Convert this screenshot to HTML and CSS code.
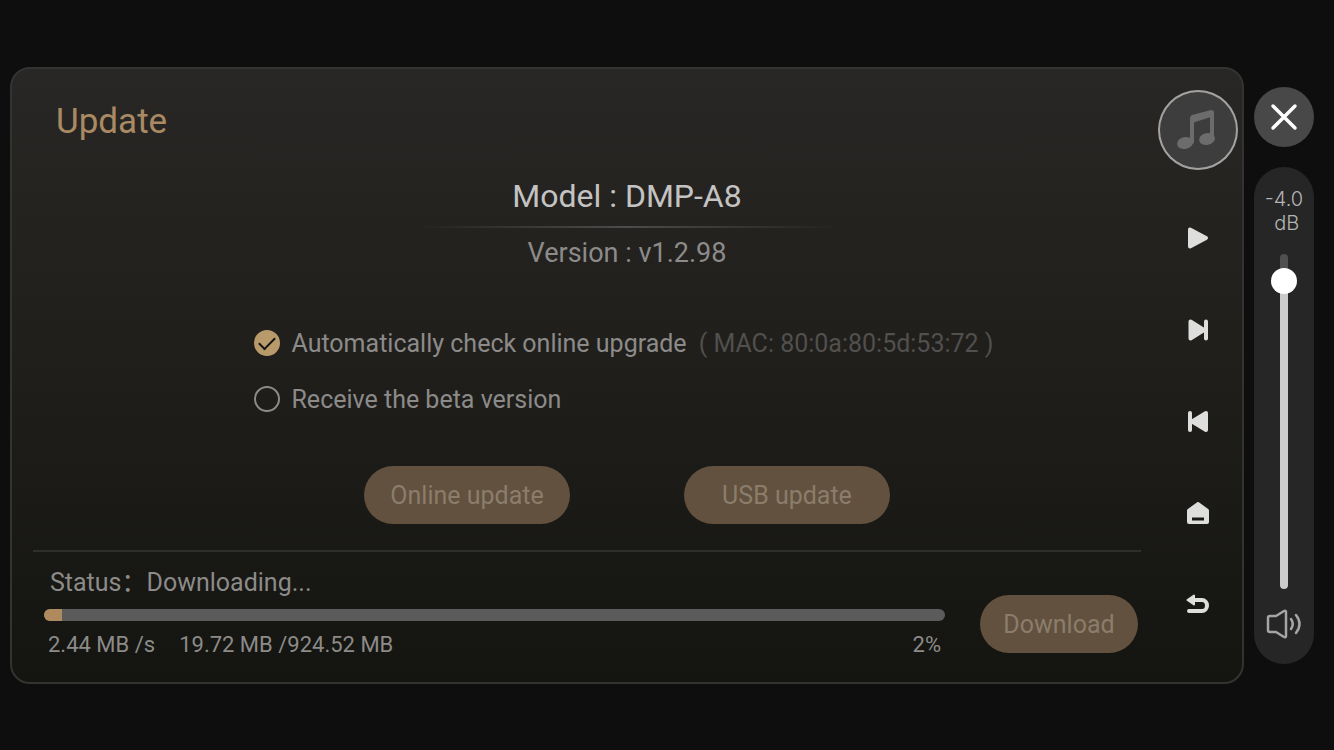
FILE: index.html
```html
<!DOCTYPE html>
<html lang="en">
<head>
    <meta charset="UTF-8">
    <meta name="viewport" content="width=device-width, initial-scale=1.0">
    <title>Update</title>
    <link rel="stylesheet" href="styles.css">
</head>
<body>
    <main class="panel">
        <div class="content">
            <h1>Update</h1>
            <section class="info">
                <h2>Model : DMP-A8</h2>
                <p class="version">Version : v1.2.98</p>
                <div class="options">
                    <div class="option">
                        <input type="checkbox" id="autoCheck" checked>
                        <label for="autoCheck">Automatically check online upgrade</label>
                        <span class="mac">( MAC: 80:0a:80:5d:53:72 )</span>
                    </div>
                    <div class="option">
                        <input type="checkbox" id="beta">
                        <label for="beta">Receive the beta version</label>
                    </div>
                </div>
                <div class="actions">
                    <button type="button" class="btn btn-wide">Online update</button>
                    <button type="button" class="btn btn-wide">USB update</button>
                </div>
            </section>
            <section class="download">
                <div class="status">
                    <label for="progress">Status&#xFF1A;Downloading...</label>
                    <progress id="progress" value="2" max="100"></progress>
                    <div class="stats">
                        <span>2.44 MB /s</span>
                        <span>19.72 MB /924.52 MB</span>
                        <span class="percent">2%</span>
                    </div>
                </div>
                <button type="button" class="btn">Download</button>
            </section>
        </div>
        <nav class="controls">
            <button type="button" class="cover" aria-label="Now playing">
                <svg width="80" height="80" viewBox="0 0 80 80">
                    <path d="M34 52V29L54 23V47" fill="none" stroke-width="4"/>
                    <path d="M32 28Q32 26 34 25L53 20Q56 20 56 23V26L34 33Z"/>
                    <ellipse cx="27" cy="53" rx="8" ry="6" transform="rotate(-12 27 53)" fill="#6c6c6c"/>
                    <ellipse cx="49" cy="49" rx="8" ry="6" transform="rotate(-12 49 49)" fill="#6c6c6c"/>
                </svg>
            </button>
            <button type="button" aria-label="Play">
                <svg width="24" height="24" viewBox="0 0 24 24">
                    <path d="M4 3.500v17L20 12z" stroke-width="4"/>
                </svg>
            </button>
            <button type="button" aria-label="Next">
                <svg width="24" height="24" viewBox="0 0 24 24">
                    <path d="M4.500 3.500v17L18 12z" stroke-width="4"/>
                    <path d="M20 3.500v17" stroke-width="4"/>
                </svg>
            </button>
            <button type="button" aria-label="Previous">
                <svg width="24" height="24" viewBox="0 0 24 24">
                    <path d="M20 3v17L6 11.500z" stroke-width="4"/>
                    <path d="M4 3v17" stroke-width="4"/>
                </svg>
            </button>
            <button type="button" aria-label="Home">
                <svg width="24" height="24" viewBox="0 0 24 24">
                    <path d="M3 8.500L12 2l9 6.500V20H3z" stroke-width="4"/>
                    <path class="cut" d="M6 17h12" stroke-width="3"/>
                </svg>
            </button>
            <button type="button" aria-label="Back">
                <svg width="24" height="24" viewBox="0 0 24 24">
                    <path class="line" d="M6 6h10a5 5.500 0 0 1 0 11H3" stroke-width="4"/>
                    <path d="M1.500 6L8 1.500v9z" stroke-width="2"/>
                </svg>
            </button>
        </nav>
    </main>
    <aside class="side">
        <button type="button" class="close" aria-label="Close">
            <svg width="60" height="60" viewBox="0 0 60 60">
                <path d="M19 19L41 41M41 19L19 41" stroke="#fff" stroke-width="3.500" stroke-linecap="round"/>
            </svg>
        </button>
        <div class="volume">
            <label for="volume">-4.0<br>&nbsp;dB</label>
            <input type="range" id="volume" min="-90" max="0" step="0.5" value="-4">
            <button type="button" class="mute" aria-label="Mute">
                <svg width="36" height="32" viewBox="0 0 36 32" fill="none" stroke="#a5a5a5" stroke-width="2.500" stroke-linejoin="round" stroke-linecap="round">
                    <path d="M4 8H10L18 3Q20 2 20 4V28Q20 30 18 29L10 24H4Q2 24 2 22V10Q2 8 4 8Z"/>
                    <path d="M25 11Q28.500 16 25 21"/>
                    <path d="M30 7Q37 16 30 25"/>
                </svg>
            </button>
        </div>
    </aside>
</body>
</html>
```

FILE: styles.css
```css
* {
    box-sizing: border-box;
}
body {
    font-family: Roboto, "Noto Sans CJK SC", sans-serif;
    background: #0e0e0e;
    margin: 0;
    padding: 67px 20px 66px 10px;
    display: flex;
    gap: 10px;
    min-height: 100vh;
    color: #8c8b89;
}
h1, h2, p {
    margin: 0;
    font-weight: 400;
}
button {
    font-family: inherit;
    border: none;
    padding: 0;
    background: none;
    cursor: pointer;
}
svg {
    display: block;
}
.panel {
    flex: 1;
    display: flex;
    background: linear-gradient(#282725, #201f1c 45%, #141410);
    border: 2px solid #333332;
    border-radius: 20px;
}
.content {
    flex: 1;
    display: flex;
    flex-direction: column;
    padding-top: 33px;
}
h1 {
    font-size: 35px;
    line-height: 40px;
    color: #a98a62;
    padding-left: 44px;
}
.info {
    display: flex;
    flex-direction: column;
    align-items: center;
    padding: 34px 0 26px 88px;
}
h2 {
    font-size: 32px;
    line-height: 40px;
    color: #c4c3c2;
}
.version {
    font-size: 27px;
    line-height: 32px;
    padding: 11px 0 0;
    margin-top: 10px;
    width: 420px;
    text-align: center;
    background: linear-gradient(to right, transparent, #4c4c4a 50%, transparent) no-repeat top / 100% 2px;
}
.options {
    display: flex;
    flex-direction: column;
    gap: 24px;
    margin-top: 59px;
    padding-right: 6px;
    font-size: 25px;
    line-height: 32px;
}
.option {
    display: flex;
    align-items: center;
}
.option input {
    appearance: none;
    width: 26px;
    height: 26px;
    margin: 0 11px 2px 0;
    border: 2px solid #8c8b89;
    border-radius: 50%;
    display: grid;
    place-items: center;
}
.option input:checked {
    background: #b89a6b;
    border-color: #b89a6b;
}
.option input:checked::after {
    content: "";
    width: 14px;
    height: 7px;
    margin-bottom: 4px;
    border-left: 2px solid #14130f;
    border-bottom: 2px solid #14130f;
    transform: rotate(-45deg);
}
.mac {
    color: #51504e;
    margin-left: 12px;
}
.actions {
    display: flex;
    gap: 114px;
    margin-top: 50px;
}
.btn {
    width: 158px;
    height: 58px;
    border-radius: 29px;
    background: #62513e;
    color: #8b7d6b;
    font-size: 25px;
}
.btn-wide {
    width: 206px;
}
.download {
    display: flex;
    align-items: flex-end;
    gap: 35px;
    margin: 0 13px 0 21px;
    padding: 15px 3px 20px 11px;
    border-top: 2px solid #2e2e2c;
}
.download .btn {
    margin-bottom: 8px;
}
.status {
    flex: 1;
    display: flex;
    flex-direction: column;
}
.status label {
    font-size: 25px;
    line-height: 32px;
    padding-left: 6px;
}
progress {
    appearance: none;
    width: 100%;
    height: 12px;
    margin: 10px 0 8px;
    border-radius: 6px;
    overflow: hidden;
}
progress::-webkit-progress-bar {
    background: #5b5b5b;
}
progress::-webkit-progress-value {
    background: #ae8a5e;
}
.stats {
    display: flex;
    gap: 24px;
    font-size: 22px;
    line-height: 32px;
    padding: 0 4px;
}
.percent {
    margin-left: auto;
}
.controls {
    width: 88px;
    display: flex;
    flex-direction: column;
    align-items: center;
    padding-top: 21px;
}
.controls button {
    width: 80px;
    height: 92px;
    display: grid;
    place-items: center;
}
.controls .cover {
    height: 80px;
    margin-bottom: 22px;
    border-radius: 50%;
    background: #3d3d3d;
    box-shadow: inset 0 0 0 2px #a3a2a1;
}
.controls path {
    fill: #dededd;
    stroke: #dededd;
    stroke-linejoin: round;
    stroke-linecap: round;
}
.controls .cover path {
    fill: #6c6c6c;
    stroke: none;
}
.controls .cover path:first-child {
    fill: none;
    stroke: #6c6c6c;
}
.controls .line {
    fill: none;
}
.controls .cut {
    stroke: #181815;
    stroke-linecap: butt;
}
.side {
    width: 60px;
    display: flex;
    flex-direction: column;
    gap: 20px;
    padding: 20px 0;
}
.close {
    height: 60px;
    border-radius: 50%;
    background: #484848;
}
.volume {
    flex: 1;
    display: flex;
    flex-direction: column;
    align-items: center;
    padding: 20px 0 24px;
    border-radius: 30px;
    background: #262626;
}
.volume label {
    font-family: Inter, sans-serif;
    font-size: 20px;
    font-weight: 300;
    line-height: 24px;
    text-align: center;
    color: #b4b4b4;
}
.volume input {
    appearance: none;
    writing-mode: vertical-lr;
    direction: rtl;
    flex: 1;
    width: 26px;
    min-height: 200px;
    margin: 19px 0;
    background: none;
}
.volume input::-webkit-slider-runnable-track {
    width: 8px;
    border-radius: 4px;
    background: linear-gradient(#505050 5%, #cbcbcb 5%);
}
.volume input::-webkit-slider-thumb {
    appearance: none;
    width: 26px;
    height: 26px;
    margin-left: -9px;
    border-radius: 50%;
    background: #fff;
}
```
